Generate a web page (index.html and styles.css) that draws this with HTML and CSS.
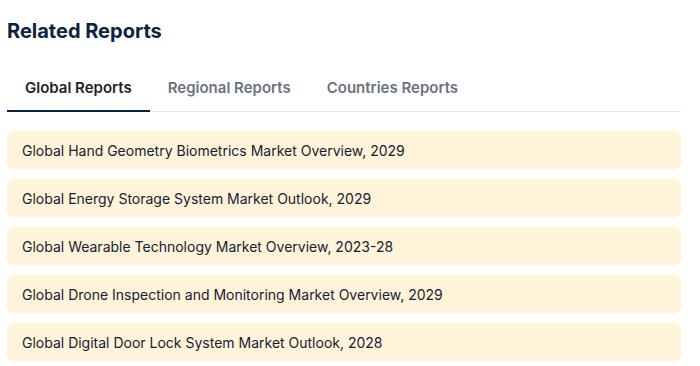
FILE: index.html
```html
<!DOCTYPE html>
<html lang="en">

<head>
    <meta charset="UTF-8">
    <title>Related Reports</title>
    <link rel="stylesheet" href="styles.css">
</head>

<body>
    <div class="related">
        <h2 class="related_title">Related Reports</h2>
        <div class="tabs">
            <button type="button" class="tab active">Global Reports</button>
            <button type="button" class="tab">Regional Reports</button>
            <button type="button" class="tab">Countries Reports</button>
        </div>
        <ul class="report_list">
            <li><a href="#">Global Hand Geometry Biometrics Market Overview, 2029</a></li>
            <li><a href="#">Global Energy Storage System Market Outlook, 2029</a></li>
            <li><a href="#">Global Wearable Technology Market Overview, 2023-28</a></li>
            <li><a href="#">Global Drone Inspection and Monitoring Market Overview, 2029</a></li>
            <li><a href="#">Global Digital Door Lock System Market Outlook, 2028</a></li>
        </ul>
    </div>
</body>

</html>
```

FILE: styles.css
```css
* {
    box-sizing: border-box;
}

body {
    margin: 0;
    font-family: Inter, "Noto Sans", sans-serif;
    background-color: #fff;
}

.related {
    width: 674px;
    margin-left: 7px;
    padding-top: 18px;
}

.related_title {
    margin: 0;
    font-size: 20px;
    line-height: 26px;
    font-weight: 700;
    color: #0b2340;
}

.tabs {
    display: flex;
    margin-top: 33px;
    border-bottom: 1px solid #e5e7eb;
}

.tab {
    padding: 1px 18px 12px;
    line-height: 20px;
    border: none;
    border-bottom: 2px solid transparent;
    margin-bottom: -1px;
    background: none;
    font-family: inherit;
    font-size: 15px;
    font-weight: 600;
    color: #6b7280;
    cursor: pointer;
}

.tab.active {
    color: #1f2328;
    border-bottom-color: #0b2340;
}

.report_list {
    list-style: none;
    margin: 19px 0 0;
    padding: 0;
    display: flex;
    flex-direction: column;
    gap: 10px;
}

.report_list li {
    height: 38px;
    display: flex;
    align-items: center;
    padding: 0 15px;
    background-color: #fff4d9;
    border-radius: 6px;
}

.report_list a {
    font-size: 14px;
    color: #152035;
    text-decoration: none;
}
```
